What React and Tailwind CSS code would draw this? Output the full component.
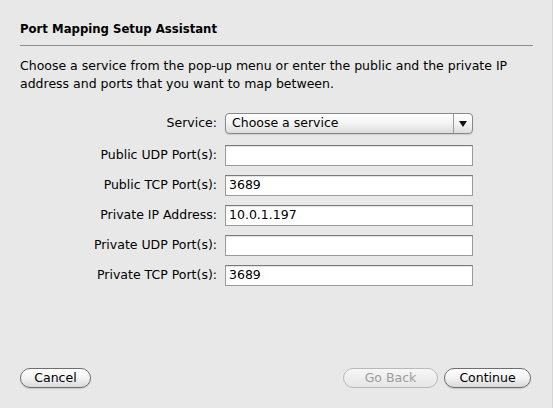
import React from 'react';

const font = { fontFamily: '"DejaVu Sans", "Liberation Sans", sans-serif' };

const Field = ({ value }) => (
  <div className="w-[248px] h-[21px] bg-white border border-[#9b9b9b] border-t-[#7a7a7a] shadow-[inset_0_1px_1px_rgba(0,0,0,0.12)] flex items-center px-[3px] text-[12.5px] text-black">
    {value}
  </div>
);

const Row = ({ label, children, className = '' }) => (
  <div className={`flex items-center gap-[8px] ${className}`}>
    <div className="w-[197px] text-right text-[12.5px] text-black whitespace-nowrap">{label}</div>
    {children}
  </div>
);

const PillButton = ({ children, disabled, className = '' }) => (
  <button
    className={`h-[20px] rounded-full border text-[12.5px] flex items-center justify-center ${
      disabled
        ? 'border-[#b9b9b9] text-[#9c9c9c] bg-gradient-to-b from-[#f6f6f6] to-[#e6e6e6]'
        : 'border-[#6e6e6e] text-black bg-gradient-to-b from-white via-[#f3f3f3] to-[#d9d9d9] shadow-[0_1px_1px_rgba(0,0,0,0.15)]'
    } ${className}`}
  >
    {children}
  </button>
);

export default function App() {
  const fields = [
    { label: 'Public UDP Port(s):', value: '' },
    { label: 'Public TCP Port(s):', value: '3689' },
    { label: 'Private IP Address:', value: '10.0.1.197' },
    { label: 'Private UDP Port(s):', value: '' },
    { label: 'Private TCP Port(s):', value: '3689' },
  ];

  return (
    <div style={font} className="w-[553px] h-[408px] bg-[#e8e8e8] flex flex-col border-r border-[#d4d4d4]">
      <div className="pt-[20px] px-[20px]">
        <h1 className="text-[11.7px] font-bold text-black leading-[18px]">Port Mapping Setup Assistant</h1>
        <div className="mt-[7px] h-px bg-[#8c8c8c] w-[513px]" />
        <p className="mt-[11px] text-[12.5px] leading-[18px] text-black">
          Choose a service from the pop-up menu or enter the public and the private IP address and ports that you want to map between.
        </p>
      </div>

      <div className="mt-[20px] pl-[20px] flex flex-col">
        <Row label="Service:">
          <div className="w-[248px] h-[21px] rounded-[4px] border border-[#8a8a8a] bg-gradient-to-b from-white via-[#f4f4f4] to-[#dcdcdc] flex items-stretch text-[12.5px] shadow-[0_1px_1px_rgba(0,0,0,0.12)]">
            <div className="flex-1 flex items-center pl-[6px]">Choose a service</div>
            <div className="w-[19px] border-l border-[#9a9a9a] flex items-center justify-center">
              <svg width="8" height="6" viewBox="0 0 8 6"><path d="M0 0h8L4 6z" fill="#111" /></svg>
            </div>
          </div>
        </Row>
        {fields.map((f, i) => (
          <Row key={i} label={f.label} className={i === 0 ? 'mt-[11px]' : 'mt-[9px]'}>
            <Field value={f.value} />
          </Row>
        ))}
      </div>

      <div className="mt-auto mb-[20px] px-[20px] flex items-center">
        <PillButton className="w-[71px]">Cancel</PillButton>
        <div className="flex-1" />
        <PillButton disabled className="w-[95px]">Go Back</PillButton>
        <PillButton className="w-[87px] ml-[6px] mr-[1px]">Continue</PillButton>
      </div>
    </div>
  );
}
